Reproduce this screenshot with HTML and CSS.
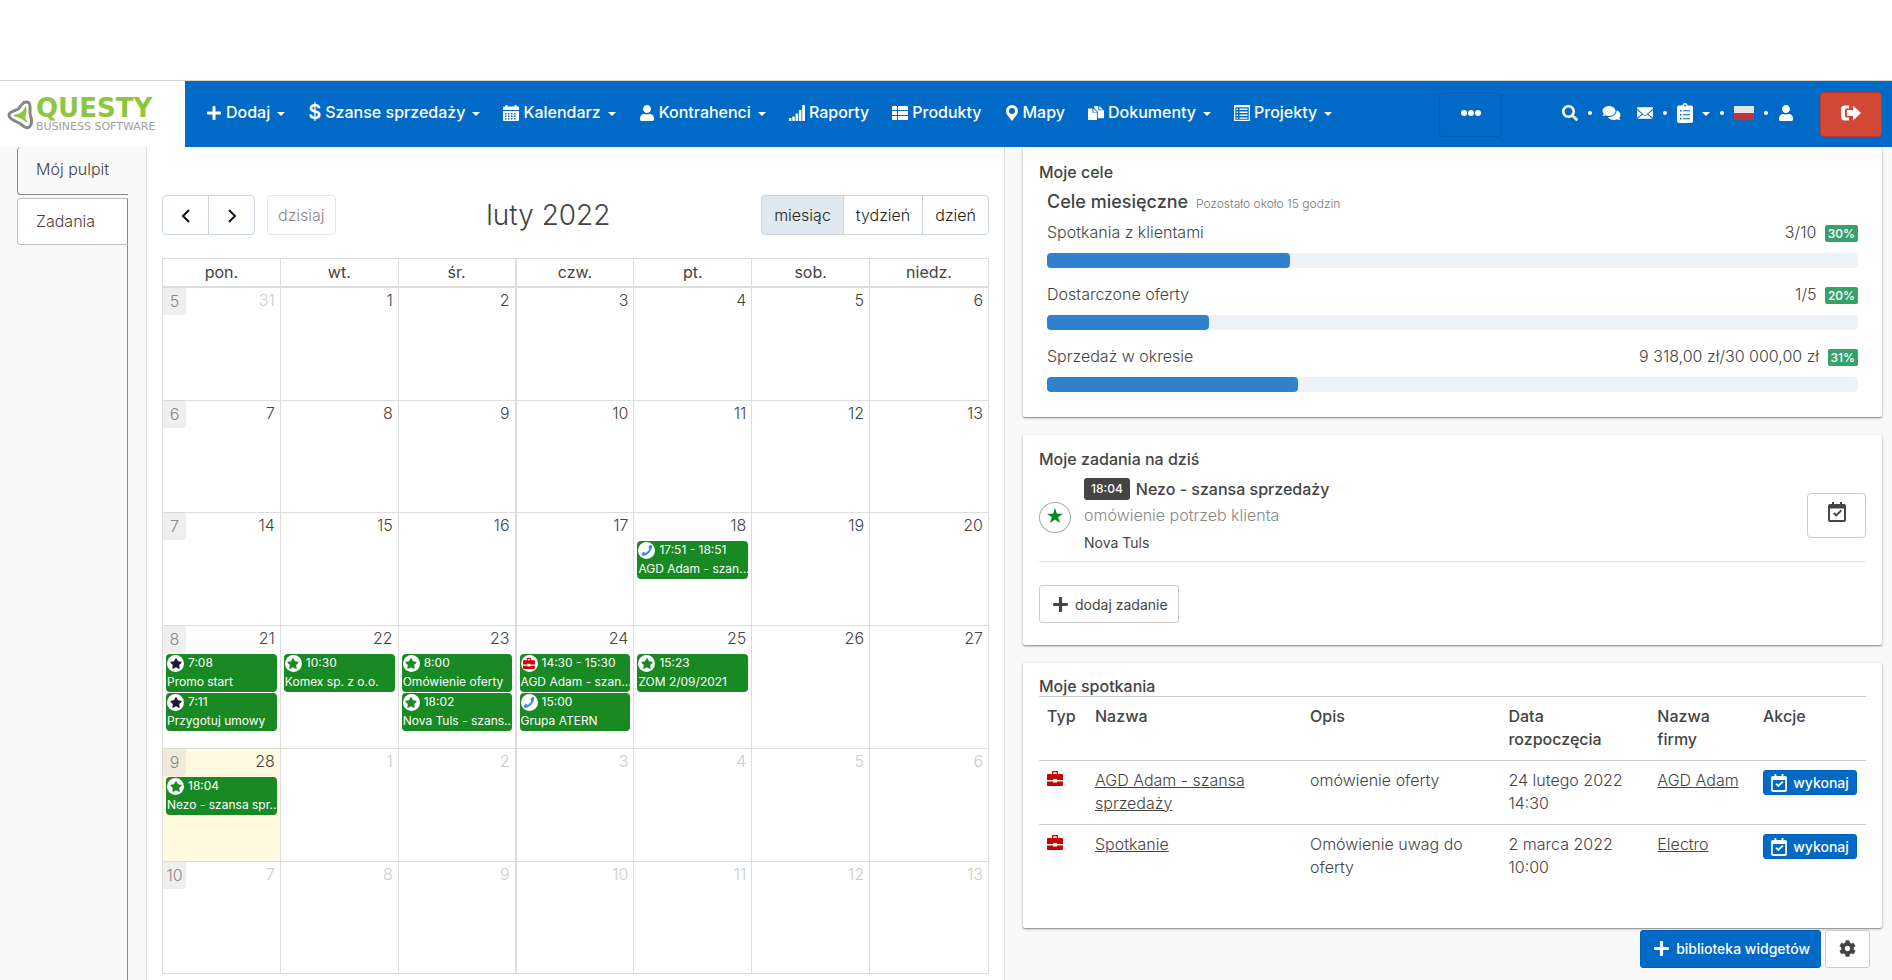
FILE: index.html
```html
<!DOCTYPE html>
<html lang="pl">
<head>
<meta charset="utf-8">
<meta name="viewport" content="width=device-width, initial-scale=1">
<title>Questy – Mój pulpit</title>
<link rel="stylesheet" href="styles.css">
</head>
<body>
<svg class="sprite" aria-hidden="true">
  <symbol id="i-plus" viewBox="0 0 448 512"><path d="M416 208H272V64c0-17.67-14.33-32-32-32h-32c-17.67 0-32 14.33-32 32v144H32c-17.67 0-32 14.33-32 32v32c0 17.67 14.33 32 32 32h144v144c0 17.67 14.33 32 32 32h32c17.67 0 32-14.33 32-32V304h144c17.67 0 32-14.33 32-32v-32c0-17.67-14.33-32-32-32z"/></symbol>
  <symbol id="i-calendar" viewBox="0 0 16 16"><path fill-rule="evenodd" d="M0 5V2.5Q0 1.5 1 1.500H2.500V0H4.500V1.500H11.500V0H13.500V1.500H15Q16 1.500 16 2.500V5zM0 6H16V15Q16 16 15 16H1Q0 16 0 15zM2 8v1.500h1.500V8zm3 0v1.500h1.500V8zm3 0v1.500h1.500V8zm3 0v1.500h1.500V8zM2 10.500V12h1.500v-1.500zm3 0V12h1.500v-1.500zm3 0V12h1.500v-1.500zm3 0V12h1.500v-1.500zM2 13v1.500h1.500V13zm3 0v1.500h1.500V13zm3 0v1.500h1.500V13zm3 0v1.500h1.500V13z"/></symbol>
  <symbol id="i-user" viewBox="0 0 448 512"><path d="M224 256c70.7 0 128-57.3 128-128S294.7 0 224 0 96 57.3 96 128s57.3 128 128 128zm89.600 32h-16.700c-22.200 10.200-46.900 16-72.900 16s-50.600-5.800-72.900-16h-16.700C60.200 288 0 348.200 0 422.400V464c0 26.500 21.500 48 48 48h352c26.500 0 48-21.500 48-48v-41.600c0-74.200-60.200-134.400-134.400-134.400z"/></symbol>
  <symbol id="i-bars" viewBox="0 0 16 16"><path d="M0 13h2.500v3H0zM3.300 11.500h2.500V16H3.300zM6.600 8.500h2.500V16H6.600zM9.900 5h2.500v11H9.900zM13.200 0H16v16h-2.800z"/></symbol>
  <symbol id="i-list" viewBox="0 0 16 16"><path d="M1 1h4v4H0V2Q0 1 1 1zM6 1h9q1 0 1 1v3H6zM0 6h5v4H0zM6 6h10v4H6zM0 11h5v4H1q-1 0-1-1zM6 11h10v3q0 1-1 1H6z"/></symbol>
  <symbol id="i-pin" viewBox="0 0 12 16"><path fill-rule="evenodd" d="M6 0a6 6 0 0 1 6 6c0 3.500-3 6-6 10C3 12 0 9.500 0 6a6 6 0 0 1 6-6zm0 3a3 3 0 1 0 0 6 3 3 0 0 0 0-6z"/></symbol>
  <symbol id="i-docs" viewBox="0 0 18 16"><path d="M0 3h5v4.500h5V16H0zM6 3l4 4H6zM7 0h4.500v5H18v9h-7V6.500L7 2.500zM12.500 0L17 4.200h-4.500z"/></symbol>
  <symbol id="i-project" viewBox="0 0 16 16"><path fill-rule="evenodd" d="M0 0h16v16H0zM1.300 2.300v12.400h13.400V2.300zM2.500 3.500H4V5H2.500zm3 0h8V5h-8zm-3 3H4V8H2.500zm3 0h8V8h-8zm-3 3H4V11H2.500zm3 0h8V11h-8zm-3 3H4v1.300H2.500zm3 0h8v1.300h-8z"/></symbol>
  <symbol id="i-search" viewBox="0 0 512 512"><path d="M505 442.700L405.300 343c-4.500-4.500-10.600-7-17-7H372c27.600-35.300 44-79.700 44-128C416 93.100 322.900 0 208 0S0 93.100 0 208s93.100 208 208 208c48.300 0 92.700-16.400 128-44v16.300c0 6.400 2.500 12.500 7 17l99.700 99.700c9.400 9.400 24.600 9.400 33.900 0l28.300-28.300c9.400-9.400 9.400-24.600.1-34zM208 336c-70.700 0-128-57.200-128-128 0-70.700 57.200-128 128-128 70.700 0 128 57.200 128 128 0 70.700-57.200 128-128 128z"/></symbol>
  <symbol id="i-comments" viewBox="0 0 576 512"><path d="M416 192c0-88.400-93.100-160-208-160S0 103.600 0 192c0 34.300 14.100 65.900 38 92-13.400 30.200-35.500 54.200-35.800 54.500-2.200 2.300-2.800 5.700-1.500 8.700S4.800 352 8 352c36.600 0 66.900-12.300 88.700-25 32.200 15.700 70.300 25 111.300 25 114.900 0 208-71.600 208-160zm122 220c23.900-26 38-57.700 38-92 0-66.900-53.500-124.200-129.300-148.100.9 6.600 1.300 13.300 1.300 20.100 0 105.900-107.700 192-240 192-10.800 0-21.300-.8-31.700-1.900C207.800 439.600 281.800 480 368 480c41 0 79.100-9.200 111.300-25 21.800 12.700 52.100 25 88.700 25 3.200 0 6.100-1.900 7.300-4.800 1.300-2.900.7-6.300-1.500-8.700-.3-.3-22.400-24.200-35.800-54.500z"/></symbol>
  <symbol id="i-mail" viewBox="0 0 17 12"><path d="M0 0h17v1.300L10 7.500Q8.500 8.700 7 7.500L0 1.300zM0 2.700l5 4.400-5 4zM17 2.700l-5 4.400 5 4zM5.800 7.800q2.700 2.200 5.400 0L16.500 12H.5z"/></symbol>
  <symbol id="i-clipboard" viewBox="0 0 16 20"><path fill-rule="evenodd" d="M2 2.500h3.500a2.500 2.500 0 0 1 5 0H14q2 0 2 2V18q0 2-2 2H2q-2 0-2-2V4.500q0-2 2-2zM8 1.600a1 1 0 1 0 0 2 1 1 0 0 0 0-2zM3 7v1.500h1.500V7zm3 .2v1h7v-1zM3 11v1.500h1.500V11zm3 .2v1h7v-1zM3 15v1.500h1.500V15zm3 .2v1h7v-1z"/></symbol>
  <symbol id="i-exit" viewBox="0 0 20 16"><path d="M8 .5v3H5Q4 3.500 4 4.500v7q0 1 1 1h3v3H4q-4 0-4-4v-7q0-4 4-4zM12 .5L20 8l-8 7.500V11H6V5h6z"/></symbol>
  <symbol id="i-star" viewBox="0 0 576 512"><path d="M259.300 17.800L194 150.200 47.900 171.500c-26.200 3.800-36.700 36.100-17.700 54.600l105.700 103-25 145.500c-4.500 26.300 23.200 46 46.400 33.700L288 439.600l130.700 68.700c23.200 12.200 50.900-7.400 46.400-33.700l-25-145.500 105.700-103c19-18.500 8.500-50.800-17.700-54.600L382 150.200 316.700 17.800c-11.700-23.600-45.600-23.900-57.400 0z"/></symbol>
  <symbol id="i-star-sharp" viewBox="0 0 16 15"><path d="M8 0l1.900 5.700H16l-4.900 3.600L13 15l-5-3.500L3 15l1.900-5.700L0 5.700h6.100z"/></symbol>
  <symbol id="i-phone" viewBox="0 0 14 14"><path d="M11 0h2.500Q14 3 12.500 6 10 11 5.500 13 3 14 .6 13.500L0 11l3-2.300 2.300 1.500Q8.500 8.500 10 5.500L8.700 3z"/></symbol>
  <symbol id="i-case" viewBox="0 0 16 15"><path fill-rule="evenodd" d="M5 3V1q0-1 1-1h4q1 0 1 1v2h4q1 0 1 1v5h-6V8H6v1H0V4q0-1 1-1zm1.300 0h3.400V1.300H6.300zM0 10.500h6v1h4v-1h6V14q0 1-1 1H1q-1 0-1-1z"/></symbol>
  <symbol id="i-check" viewBox="0 0 18 20"><path fill-rule="evenodd" d="M4 0h2v2h6V0h2v2h2q2 0 2 2v14q0 2-2 2H2q-2 0-2-2V4q0-2 2-2h2zM2 6.500V18h14V6.500zM5 11.500l1.400-1.300L8.200 12l4.400-4.300L14 9.100l-5.800 5.700z"/></symbol>
  <symbol id="i-cog" viewBox="0 0 512 512"><path d="M487.400 315.700l-42.600-24.600c4.300-23.200 4.300-47 0-70.200l42.600-24.600c4.900-2.800 7.100-8.600 5.500-14-11.100-35.600-30-67.800-54.700-94.600-3.800-4.100-10-5.100-14.800-2.300L380.800 110c-17.900-15.400-38.500-27.300-60.800-35.100V25.800c0-5.600-3.900-10.500-9.400-11.700-36.700-8.200-74.300-7.800-109.200 0-5.500 1.200-9.400 6.100-9.400 11.700V75c-22.200 7.900-42.800 19.800-60.800 35.100L88.700 85.500c-4.900-2.800-11-1.900-14.800 2.300-24.700 26.700-43.600 58.900-54.700 94.600-1.700 5.400.6 11.200 5.500 14L67.300 221c-4.300 23.200-4.300 47 0 70.200l-42.600 24.600c-4.900 2.800-7.100 8.600-5.500 14 11.100 35.600 30 67.800 54.700 94.600 3.800 4.100 10 5.100 14.800 2.300l42.600-24.600c17.900 15.400 38.500 27.300 60.800 35.100v49.200c0 5.600 3.900 10.500 9.400 11.700 36.700 8.200 74.300 7.800 109.200 0 5.500-1.200 9.400-6.100 9.400-11.700v-49.200c22.200-7.900 42.800-19.800 60.800-35.100l42.600 24.600c4.900 2.800 11 1.900 14.800-2.300 24.700-26.700 43.600-58.900 54.700-94.600 1.500-5.500-.7-11.300-5.600-14.100zM256 336c-44.100 0-80-35.900-80-80s35.900-80 80-80 80 35.900 80 80-35.900 80-80 80z"/></symbol>
</svg>

<header class="topbar">
  <a class="logo" href="#" aria-label="Questy Business Software">
    <svg class="logo-mark" viewBox="0 0 26 30"><path d="M17 2.500q6-2 6 4v6q0 2 1 5t0 7q-2 5-7 2l-4-3-5-2.500q-6-2.500-6-6 0-2.500 6-4.500 4-1 5.500-4.500z" fill="#fff" stroke="#868686" stroke-width="3"/><path d="M18.500 8q1 4-.5 7t1.500 7q-2-3-6-4.500t-6.500-2q4.500-.5 7.500-2.500t4-5z" fill="#8dc63f" stroke="#8dc63f" stroke-width="1.500"/></svg>
    <span class="logo-text"><span class="logo-name">QUESTY</span><span class="logo-sub">BUSINESS SOFTWARE</span></span>
  </a>
  <nav class="menu">
    <a href="#" class="caret"><svg class="ic"><use href="#i-plus"/></svg>Dodaj</a>
    <a href="#" class="caret"><b class="dollar">$</b>Szanse sprzedaży</a>
    <a href="#" class="caret"><svg class="ic"><use href="#i-calendar"/></svg>Kalendarz</a>
    <a href="#" class="caret"><svg class="ic"><use href="#i-user"/></svg>Kontrahenci</a>
    <a href="#"><svg class="ic"><use href="#i-bars"/></svg>Raporty</a>
    <a href="#"><svg class="ic"><use href="#i-list"/></svg>Produkty</a>
    <a href="#"><svg class="ic ic-pin"><use href="#i-pin"/></svg>Mapy</a>
    <a href="#" class="caret"><svg class="ic"><use href="#i-docs"/></svg>Dokumenty</a>
    <a href="#" class="caret"><svg class="ic"><use href="#i-project"/></svg>Projekty</a>
  </nav>
  <button class="more" aria-label="Więcej"><i></i><i></i><i></i></button>
  <div class="tools">
    <a href="#" aria-label="Szukaj"><svg class="ic"><use href="#i-search"/></svg></a>
    <i class="dot"></i>
    <a href="#" aria-label="Czat"><svg class="ic ic-chat"><use href="#i-comments"/></svg></a>
    <a class="mail" href="#" aria-label="Poczta"><svg class="ic"><use href="#i-mail"/></svg></a>
    <i class="dot"></i>
    <a href="#" class="caret" aria-label="Lista"><svg class="ic ic-clip"><use href="#i-clipboard"/></svg></a>
    <i class="dot"></i>
    <a href="#" class="flag" aria-label="Polski"></a>
    <i class="dot"></i>
    <a href="#" aria-label="Konto"><svg class="ic"><use href="#i-user"/></svg></a>
  </div>
  <button class="logout" aria-label="Wyloguj"><svg class="ic ic-exit"><use href="#i-exit"/></svg></button>
</header>

<div class="page">
  <nav class="tabs">
    <a href="#" class="tab tab-active">Mój pulpit</a>
    <a href="#" class="tab">Zadania</a>
    <div class="tabs-rest"></div>
  </nav>

  <main class="calendar">
    <div class="cal-bar">
      <div class="cal-left">
        <div class="group">
          <button aria-label="Poprzedni"><svg class="chev" viewBox="0 0 10 14"><path d="M8 1L2 7l6 6"/></svg></button>
          <button aria-label="Następny"><svg class="chev" viewBox="0 0 10 14"><path d="M2 1l6 6-6 6"/></svg></button>
        </div>
        <button class="today" disabled>dzisiaj</button>
      </div>
      <h2 class="cal-title">luty 2022</h2>
      <div class="group views">
        <button class="on">miesiąc</button><button>tydzień</button><button>dzień</button>
      </div>
    </div>
    <table class="month">
      <thead><tr><th>pon.</th><th>wt.</th><th>śr.</th><th>czw.</th><th>pt.</th><th>sob.</th><th>niedz.</th></tr></thead>
      <tbody>
        <tr>
          <td><div class="day off"><span class="week">5</span>31</div></td>
          <td><div class="day">1</div></td><td><div class="day">2</div></td><td><div class="day">3</div></td><td><div class="day">4</div></td><td><div class="day">5</div></td><td><div class="day">6</div></td>
        </tr>
        <tr>
          <td><div class="day"><span class="week">6</span>7</div></td>
          <td><div class="day">8</div></td><td><div class="day">9</div></td><td><div class="day">10</div></td><td><div class="day">11</div></td><td><div class="day">12</div></td><td><div class="day">13</div></td>
        </tr>
        <tr>
          <td><div class="day"><span class="week">7</span>14</div></td>
          <td><div class="day">15</div></td><td><div class="day">16</div></td><td><div class="day">17</div></td>
          <td><div class="day">18</div>
            <a href="#" class="event"><span class="when"><span class="badge"><svg class="phone"><use href="#i-phone"/></svg></span>17:51 - 18:51</span><span class="what">AGD Adam - szan...</span></a></td>
          <td><div class="day">19</div></td><td><div class="day">20</div></td>
        </tr>
        <tr class="busy">
          <td><div class="day"><span class="week">8</span>21</div>
            <a href="#" class="event"><span class="when"><span class="badge"><svg class="star-dark"><use href="#i-star"/></svg></span>7:08</span><span class="what">Promo start</span></a>
            <a href="#" class="event"><span class="when"><span class="badge"><svg class="star-dark"><use href="#i-star"/></svg></span>7:11</span><span class="what">Przygotuj umowy</span></a></td>
          <td><div class="day">22</div>
            <a href="#" class="event"><span class="when"><span class="badge"><svg class="star"><use href="#i-star"/></svg></span>10:30</span><span class="what">Komex sp. z o.o.</span></a></td>
          <td><div class="day">23</div>
            <a href="#" class="event"><span class="when"><span class="badge"><svg class="star"><use href="#i-star"/></svg></span>8:00</span><span class="what">Omówienie oferty</span></a>
            <a href="#" class="event"><span class="when"><span class="badge"><svg class="star"><use href="#i-star"/></svg></span>18:02</span><span class="what">Nova Tuls - szans...</span></a></td>
          <td><div class="day">24</div>
            <a href="#" class="event"><span class="when"><span class="badge"><svg class="case"><use href="#i-case"/></svg></span>14:30 - 15:30</span><span class="what">AGD Adam - szan...</span></a>
            <a href="#" class="event"><span class="when"><span class="badge"><svg class="phone"><use href="#i-phone"/></svg></span>15:00</span><span class="what">Grupa ATERN</span></a></td>
          <td><div class="day">25</div>
            <a href="#" class="event"><span class="when"><span class="badge"><svg class="star"><use href="#i-star"/></svg></span>15:23</span><span class="what">ZOM 2/09/2021</span></a></td>
          <td><div class="day">26</div></td><td><div class="day">27</div></td>
        </tr>
        <tr>
          <td class="now"><div class="day"><span class="week">9</span>28</div>
            <a href="#" class="event"><span class="when"><span class="badge"><svg class="star"><use href="#i-star"/></svg></span>18:04</span><span class="what">Nezo - szansa spr...</span></a></td>
          <td><div class="day off">1</div></td><td><div class="day off">2</div></td><td><div class="day off">3</div></td><td><div class="day off">4</div></td><td><div class="day off">5</div></td><td><div class="day off">6</div></td>
        </tr>
        <tr>
          <td><div class="day off"><span class="week">10</span>7</div></td>
          <td><div class="day off">8</div></td><td><div class="day off">9</div></td><td><div class="day off">10</div></td><td><div class="day off">11</div></td><td><div class="day off">12</div></td><td><div class="day off">13</div></td>
        </tr>
      </tbody>
    </table>
  </main>

  <aside class="widgets">
    <section class="card goals">
      <h3>Moje cele</h3>
      <div class="goals-body">
        <h4>Cele miesięczne <small>Pozostało około 15 godzin</small></h4>
        <div class="goal"><span>Spotkania z klientami</span><span class="score">3/10 <b>30%</b></span></div>
        <div class="track"><div class="fill" style="width:30%"></div></div>
        <div class="goal"><span>Dostarczone oferty</span><span class="score">1/5 <b>20%</b></span></div>
        <div class="track"><div class="fill" style="width:20%"></div></div>
        <div class="goal"><span>Sprzedaż w okresie</span><span class="score">9 318,00 zł/30 000,00 zł <b>31%</b></span></div>
        <div class="track"><div class="fill" style="width:31%"></div></div>
      </div>
    </section>

    <section class="card tasks">
      <h3>Moje zadania na dziś</h3>
      <div class="task">
        <span class="ring"><svg><use href="#i-star-sharp"/></svg></span>
        <div class="task-text">
          <div class="task-name"><span class="time">18:04</span>Nezo - szansa sprzedaży</div>
          <div class="task-desc">omówienie potrzeb klienta</div>
          <div class="task-firm">Nova Tuls</div>
        </div>
        <button class="done" aria-label="Wykonaj"><svg><use href="#i-check"/></svg></button>
      </div>
      <button class="btn add"><svg><use href="#i-plus"/></svg>dodaj zadanie</button>
    </section>

    <section class="card meetings">
      <h3>Moje spotkania</h3>
      <table class="list">
        <colgroup><col class="c-type"><col class="c-name"><col class="c-desc"><col class="c-date"><col><col class="c-action"></colgroup>
        <thead><tr><th>Typ</th><th>Nazwa</th><th>Opis</th><th class="date">Data rozpoczęcia</th><th>Nazwa firmy</th><th>Akcje</th></tr></thead>
        <tbody>
          <tr><td><svg class="type"><use href="#i-case"/></svg></td><td><a href="#">AGD Adam - szansa sprzedaży</a></td><td>omówienie oferty</td><td>24 lutego 2022 14:30</td><td><a href="#">AGD Adam</a></td><td><button class="do"><svg><use href="#i-check"/></svg>wykonaj</button></td></tr>
          <tr><td><svg class="type"><use href="#i-case"/></svg></td><td><a href="#">Spotkanie</a></td><td>Omówienie uwag do oferty</td><td>2 marca 2022 10:00</td><td><a href="#">Electro</a></td><td><button class="do"><svg><use href="#i-check"/></svg>wykonaj</button></td></tr>
        </tbody>
      </table>
    </section>

    <div class="foot">
      <button class="btn primary"><svg><use href="#i-plus"/></svg>biblioteka widgetów</button>
      <button class="btn gear" aria-label="Ustawienia"><svg><use href="#i-cog"/></svg></button>
    </div>
  </aside>
</div>
</body>
</html>
```
FILE: styles.css
```css
* { box-sizing: border-box; }
body {
  margin: 0;
  min-height: 100vh;
  display: flex;
  flex-direction: column;
  padding-top: 80px;
  background: #fff;
  color: #444;
  font: 300 16px/23px Inter, "Open Sans", sans-serif;
}
a { color: inherit; text-decoration: none; }
button { font: inherit; color: inherit; cursor: pointer; padding: 0; }
h2, h3, h4 { margin: 0; font-weight: 500; }
svg { fill: currentColor; flex: none; }
.sprite { display: none; }

/* top bar */
.topbar {
  display: flex;
  align-items: center;
  height: 67px;
  border-top: 1px solid #d4d4d4;
  background: #006ac6;
  color: #fff;
  padding-right: 10px;
}
.logo {
  width: 185px;
  height: 68px;
  align-self: flex-start;
  background: #fff;
  border-bottom: 1px solid #ddd;
  display: flex;
  align-items: center;
  padding-left: 7px;
  gap: 3px;
  flex: none;
}
.logo-mark { width: 26px; height: 30px; }
.logo-text { display: flex; flex-direction: column; }
.logo-name { color: #8dc63f; font: 700 26px/24px "DejaVu Sans", sans-serif; }
.logo-sub { color: #a0a0a0; font: 400 11px/14px "DejaVu Sans", sans-serif; white-space: nowrap; }
.menu { display: flex; gap: 23px; padding: 0 0 3px 21px; font-weight: 500; }
.menu a { display: flex; align-items: center; gap: 4px; white-space: nowrap; }
.ic { width: 16px; height: 16px; display: block; }
.ic-pin { width: 14px; }
.ic-chat { width: 19px; }
.ic-clip { height: 20px; }
.ic-exit { width: 20px; }
.dollar { font-size: 20px; font-weight: 600; }
.caret::after {
  content: "";
  border: 4px solid transparent;
  border-top-color: #fff;
  border-bottom: 0;
  margin: 3px 0 0 3px;
}
.more {
  width: 63px;
  height: 45px;
  margin-left: auto;
  padding-bottom: 3px;
  background: none;
  border: 1px solid #005fb2;
  border-radius: 4px;
  display: flex;
  align-items: center;
  justify-content: center;
  gap: 1px;
}
.more i { width: 6px; height: 6px; border-radius: 50%; background: #fff; }
.tools { display: flex; align-items: center; gap: 10px; margin: 0 26px 0 60px; padding-bottom: 3px; }
.tools a { display: flex; align-items: center; gap: 6px; }
.tools .mail { margin-left: 6px; }
.dot { width: 4px; height: 4px; border-radius: 50%; background: #fff; }
.tools .flag { width: 20px; height: 14px; background: linear-gradient(#e6e6e6 50%, #c8313a 50%); }
.logout {
  width: 62px;
  height: 45px;
  display: flex;
  align-items: center;
  justify-content: center;
  padding-bottom: 3px;
  background: #d14836;
  border: 1px solid #c23a2e;
  border-radius: 4px;
  color: #fff;
}

/* page columns */
.page {
  flex: 1;
  display: grid;
  grid-template-columns: 128px minmax(0, 1fr) minmax(0, 1fr);
  column-gap: 18px;
  padding-right: 10px;
  background: #f9f9f9;
}
.tabs { display: flex; flex-direction: column; padding-left: 17px; }
.tab {
  height: 47px;
  padding: 11px 18px;
  background: #fff;
  border: 1px solid #c0c0c0;
  border-right-color: #888;
  border-radius: 4px 0 0 4px;
}
.tab-active {
  height: 48px;
  margin-bottom: 3px;
  background: none;
  border-color: #888;
  border-top: 0;
  border-right: 0;
}
.tabs-rest { flex: 1; border-right: 1px solid #888; }

/* calendar */
.calendar { background: #fff; border: solid #ddd; border-width: 0 1px; padding: 48px 15px 6px; }
.cal-bar { display: flex; justify-content: space-between; align-items: center; margin-bottom: 23px; }
.cal-left { display: flex; gap: 12px; }
.cal-title { font-size: 28px; font-weight: 300; line-height: 36px; }
.group { display: flex; }
.group button, .today {
  height: 40px;
  background: #fff;
  border: 1px solid #cbd5e0;
  color: #222;
}
.group button { width: 47px; margin-left: -1px; }
.group button:first-child { border-radius: 4px 0 0 4px; margin-left: 0; }
.group button:last-child { border-radius: 0 4px 4px 0; }
.group.views button { width: auto; padding: 0 12px; }
.group.views .on { background: #e2e8f0; }
.today { padding: 0 10px; border-color: #e2e8f0; border-radius: 4px; color: #888; }
.chev { width: 10px; height: 14px; fill: none; stroke: #111; stroke-width: 2; vertical-align: middle; }
.month {
  width: 100%;
  table-layout: fixed;
  border-spacing: 0;
  border: 1px solid #ddd;
  border-bottom: 0;
}
.month th { height: 29px; padding: 0; font-weight: 400; border-right: 1px solid #ddd; border-bottom: 2px solid #ddd; }
.month td { height: 112px; padding: 0 3px; vertical-align: top; border-right: 1px solid #ddd; border-bottom: 1px solid #ddd; }
.month tr:nth-child(odd) td { height: 113px; }
.month th:last-child, .month td:last-child { border-right: 0; }
.month th:nth-child(3), .month td:nth-child(3) { border-right-width: 2px; }
.month .busy td { height: 123px; }
.month .now { background: #fffae0; }
.day { display: flex; justify-content: flex-end; height: 28px; padding: 1px 2px 0; }
.off { color: #ccc; }
.week {
  width: 23px;
  height: 27px;
  margin: -1px auto 0 -5px;
  padding-top: 2px;
  text-align: center;
  background: rgba(190, 190, 190, 0.25);
  color: #888;
  border-radius: 0 0 4px 0;
}
.event {
  display: block;
  height: 38px;
  margin-bottom: 1px;
  padding: 1px 1px 0;
  background: #198924;
  border-radius: 4px;
  color: #fff;
  font-size: 12px;
  line-height: 18px;
  font-weight: 400;
}
.when { display: flex; gap: 4px; line-height: 15px; height: 18px; }
.what { display: block; white-space: nowrap; }
.badge { width: 17px; height: 17px; border-radius: 50%; background: #fff; display: flex; align-items: center; justify-content: center; }
.badge svg { width: 12px; height: 11px; }
.star { color: #198924; }
.star-dark { color: #1a1a2e; }
.phone { color: #3f8fd6; }
.case, .type { color: #c80000; }

/* widgets */
.card {
  background: #fff;
  padding: 13px 16px;
  margin-bottom: 18px;
  border-radius: 2px;
  box-shadow: 0 1px 3px rgba(0, 0, 0, 0.3), 0 1px 1px rgba(0, 0, 0, 0.24);
}
.card h3 { font-size: 16px; line-height: 20px; }
.goals { padding: 15px 16px 25px; }
.goals-body { padding: 8px 8px 0; }
.goals h4 { font-size: 18px; line-height: 24px; margin-bottom: 5px; }
.goals small { margin-left: 3px; font-size: 12px; font-weight: 300; color: #777; }
.goal { display: flex; justify-content: space-between; }
.score b {
  display: inline-block;
  margin-left: 4px;
  padding: 0 3px;
  background: #38a169;
  border-radius: 2px;
  color: #fff;
  font-size: 12px;
  line-height: 17px;
  font-weight: 500;
}
.track { height: 15px; margin: 9px 0 15px; border-radius: 4px; background: #edf2f7; }
.track:last-child { margin-bottom: 0; }
.fill { height: 100%; border-radius: 4px; background: #3182ce; }
.tasks { padding-top: 14px; padding-bottom: 22px; }
.task { display: flex; align-items: center; padding: 8px 0 4px; border-bottom: 1px solid #e0e0e0; margin-bottom: 23px; }
.ring { width: 32px; height: 31px; border: 1px solid #aaa; border-radius: 50%; display: flex; justify-content: center; padding-top: 5px; color: #008a20; }
.ring svg { width: 16px; height: 15px; }
.task-text { flex: 1; margin-left: 13px; line-height: 28px; }
.task-name { font-weight: 500; display: flex; align-items: center; gap: 6px; line-height: 24px; }
.time { padding: 0 7px; background: #444; border-radius: 3px; color: #fff; font-size: 12px; line-height: 22px; }
.task-desc { color: #888; }
.task-firm { font-size: 14px; font-weight: 400; line-height: 28px; }
.done { width: 59px; height: 45px; margin-bottom: 4px; background: #fff; border: 1px solid #ccc; border-radius: 4px; }
.done svg { width: 18px; height: 20px; }
.btn {
  display: inline-flex;
  align-items: center;
  justify-content: center;
  gap: 6px;
  height: 38px;
  padding: 0 10px 0 12px;
  background: #fff;
  border: 1px solid #ccc;
  border-radius: 3px;
  font-size: 14px;
  font-weight: 400;
}
.btn svg { width: 17px; height: 17px; }
.primary { background: #006ac6; border-color: #005fb2; color: #fff; font-weight: 500; }
.gear { width: 45px; padding: 0; }
.list { width: 100%; table-layout: fixed; border-collapse: collapse; }
.list th, .list td { height: 64px; padding: 8px; vertical-align: top; text-align: left; border-top: 1px solid #ccc; }
.list th { font-weight: 500; }
.list .date { padding-right: 24px; }
.list a { text-decoration: underline; }
.c-type { width: 48px; }
.c-name { width: 26%; }
.c-desc { width: 24%; }
.c-date { width: 18%; }
.c-action { width: 111px; }
.type { width: 16px; height: 15px; display: block; margin-top: 2px; }
.do {
  display: inline-flex;
  align-items: center;
  justify-content: center;
  gap: 6px;
  height: 25px;
  width: 94px;
  margin-top: 1px;
  background: #006ac6;
  border: 1px solid #005fb2;
  border-radius: 3px;
  color: #fff;
  font-size: 14px;
  font-weight: 500;
}
.do svg { width: 16px; height: 18px; }
.meetings { padding-bottom: 39px; margin-bottom: 2px; }
.foot { display: flex; justify-content: flex-end; gap: 4px; padding: 0 12px 13px 0; }
```
